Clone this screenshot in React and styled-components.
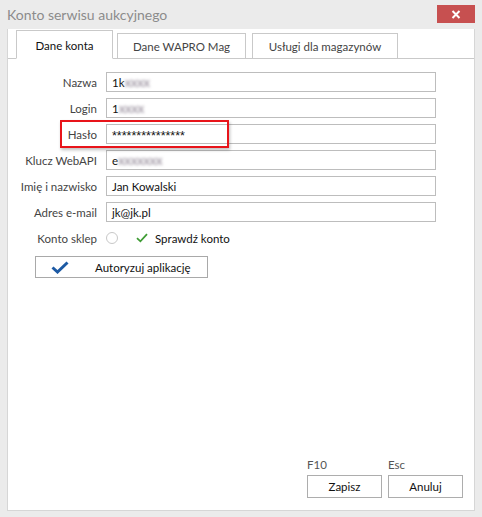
import styled, { createGlobalStyle } from "styled-components";

const GlobalStyle = createGlobalStyle`
  html, body {
    margin: 0;
    padding: 0;
    background: #ebebeb;
  }
  * {
    box-sizing: border-box;
  }
`;

const tabs = [
  { label: "Dane konta", width: 97, gap: 8 },
  { label: "Dane WAPRO Mag", width: 129, gap: 4 },
  { label: "Usługi dla magazynów", width: 146, gap: 6 },
];

export default function App() {
  return (
    <Window>
      <GlobalStyle />
      <TitleBar>
        <Title>Konto serwisu aukcyjnego</Title>
        <CloseButton>
          <svg width="10" height="9" viewBox="0 0 10 9">
            <path d="M1.5 1 L8.5 8 M8.5 1 L1.5 8" stroke="#fff" strokeWidth="2" />
          </svg>
        </CloseButton>
      </TitleBar>

      <Panel>
        <TabStrip>
          <TabLine style={{ width: tabs[0].gap }} />
          {tabs.map((t, i) => (
            <Tab key={t.label} $active={i === 0} $w={t.width} $gap={i === 0 ? 0 : t.gap}>
              {t.label}
            </Tab>
          ))}
          <TabFill />
        </TabStrip>

        <Content>
          <Form>
            <Label>Nazwa</Label>
            <Input>
              1k<Blur>xxxx</Blur>
            </Input>

            <Label>Login</Label>
            <Input>
              1<Blur>xxxx</Blur>
            </Input>

            <Label>
              Hasło
              <Highlight />
            </Label>
            <Input $password>***************</Input>

            <Label>Klucz WebAPI</Label>
            <Input>
              e<Blur>xxxxxxx</Blur>
            </Input>

            <Label>Imię i nazwisko</Label>
            <Input>Jan Kowalski</Input>

            <Label>Adres e-mail</Label>
            <Input>jk@jk.pl</Input>

            <Label>Konto sklep</Label>
            <CheckRow>
              <Radio />
              <svg width="12" height="10" viewBox="0 0 12 10">
                <path d="M1 5.2 L4.4 8.3 L11 1.2" fill="none" stroke="#3f9c35" strokeWidth="1.8" />
              </svg>
              <CheckText>Sprawdź konto</CheckText>
            </CheckRow>
          </Form>

          <AuthButton>
            <svg width="18" height="13" viewBox="0 0 18 13">
              <path d="M1.5 6.5 L6.5 11 L16.5 1.5" fill="none" stroke="#1d5aa4" strokeWidth="3" />
            </svg>
            <span>Autoryzuj aplikację</span>
          </AuthButton>

          <Footer>
            <FooterItem>
              <Hotkey>F10</Hotkey>
              <Button>Zapisz</Button>
            </FooterItem>
            <FooterItem>
              <Hotkey>Esc</Hotkey>
              <Button>Anuluj</Button>
            </FooterItem>
          </Footer>
        </Content>
      </Panel>
    </Window>
  );
}

const Window = styled.div`
  width: 482px;
  height: 517px;
  display: flex;
  flex-direction: column;
  font-family: Lato, "Noto Sans", sans-serif;
  font-size: 11.5px;
  color: #333;
`;

const TitleBar = styled.div`
  height: 29px;
  display: flex;
  align-items: flex-start;
  justify-content: space-between;
  padding: 0 7px 0 7px;
`;

const Title = styled.div`
  margin-top: 6px;
  font-size: 14px;
  color: #8c8c8c;
`;

const CloseButton = styled.div`
  margin-top: 5px;
  width: 38px;
  height: 18px;
  background: #c75050;
  display: flex;
  align-items: center;
  justify-content: center;
`;

const Panel = styled.div`
  flex: 1;
  margin: 0 7px 6px 7px;
  background: #fff;
  border: 1px solid #d6d6d6;
  border-top: none;
  display: flex;
  flex-direction: column;
`;

const TabStrip = styled.div`
  display: flex;
  align-items: flex-end;
  height: 30px;
`;

const TabLine = styled.div`
  height: 1px;
  background: #c9c9c9;
`;

const Tab = styled.div`
  width: ${(p) => p.$w}px;
  height: ${(p) => (p.$active ? 29 : 26)}px;
  border: 1px solid #c9c9c9;
  border-bottom-color: ${(p) => (p.$active ? "#fff" : "#c9c9c9")};
  margin-left: ${(p) => p.$gap}px;
  padding-top: ${(p) => (p.$active ? 2 : 0)}px;
  display: flex;
  align-items: center;
  justify-content: center;
  color: ${(p) => (p.$active ? "#111" : "#444")};
  background: #fff;
  position: relative;

  &::before {
    content: "";
    display: ${(p) => (p.$active ? "none" : "block")};
    position: absolute;
    left: -${(p) => p.$gap + 1}px;
    bottom: -1px;
    width: ${(p) => p.$gap}px;
    height: 1px;
    background: #c9c9c9;
  }
`;

const TabFill = styled.div`
  flex: 1;
  height: 1px;
  background: #c9c9c9;
`;

const Content = styled.div`
  flex: 1;
  display: flex;
  flex-direction: column;
  padding-top: 13px;
`;

const Form = styled.div`
  display: grid;
  grid-template-columns: 89px 330px;
  column-gap: 9px;
  row-gap: 6px;
  grid-auto-rows: 20px;
`;

const Label = styled.div`
  position: relative;
  text-align: right;
  align-self: center;
  color: #444;
  white-space: nowrap;
`;

const Input = styled.div`
  height: 20px;
  border: 1px solid #bdbdbd;
  padding: 0 5px;
  display: flex;
  align-items: center;
  color: #111;
  white-space: nowrap;
  font-family: ${(p) => (p.$password ? '"Liberation Sans", Arial, sans-serif' : "inherit")};
  font-size: ${(p) => (p.$password ? "12.5px" : "inherit")};
  padding-top: ${(p) => (p.$password ? "3px" : "0")};
`;

const Blur = styled.span`
  color: #a79fab;
  font-size: 13px;
  font-weight: 700;
  filter: blur(1.4px);
  letter-spacing: -0.5px;
`;

const Highlight = styled.div`
  position: absolute;
  left: 52px;
  top: 50%;
  margin-top: -14px;
  width: 169px;
  height: 28px;
  border: 2px solid #e8141a;
  box-shadow: 1px 2px 3px rgba(0, 0, 0, 0.25);
  pointer-events: none;
  z-index: 2;
`;

const CheckRow = styled.div`
  display: flex;
  align-items: center;

  svg {
    margin-left: 18px;
  }
`;

const Radio = styled.div`
  width: 12px;
  height: 12px;
  border-radius: 50%;
  border: 1px solid #c8c8c8;
  background: #fff;
`;

const CheckText = styled.span`
  margin-left: 7px;
  color: #111;
`;

const AuthButton = styled.div`
  margin: 8px 0 0 27px;
  width: 173px;
  height: 22px;
  border: 1px solid #a9a9a9;
  display: flex;
  align-items: center;
  color: #111;

  svg {
    margin: 0 26px 0 15px;
  }
`;

const Footer = styled.div`
  margin-top: auto;
  display: flex;
  justify-content: flex-end;
  gap: 6px;
  padding: 0 11px 12px 0;
`;

const FooterItem = styled.div`
  display: flex;
  flex-direction: column;
`;

const Hotkey = styled.div`
  color: #555;
  height: 17px;
`;

const Button = styled.div`
  width: 75px;
  height: 23px;
  border: 1px solid #adadad;
  display: flex;
  align-items: center;
  justify-content: center;
  color: #111;
`;
